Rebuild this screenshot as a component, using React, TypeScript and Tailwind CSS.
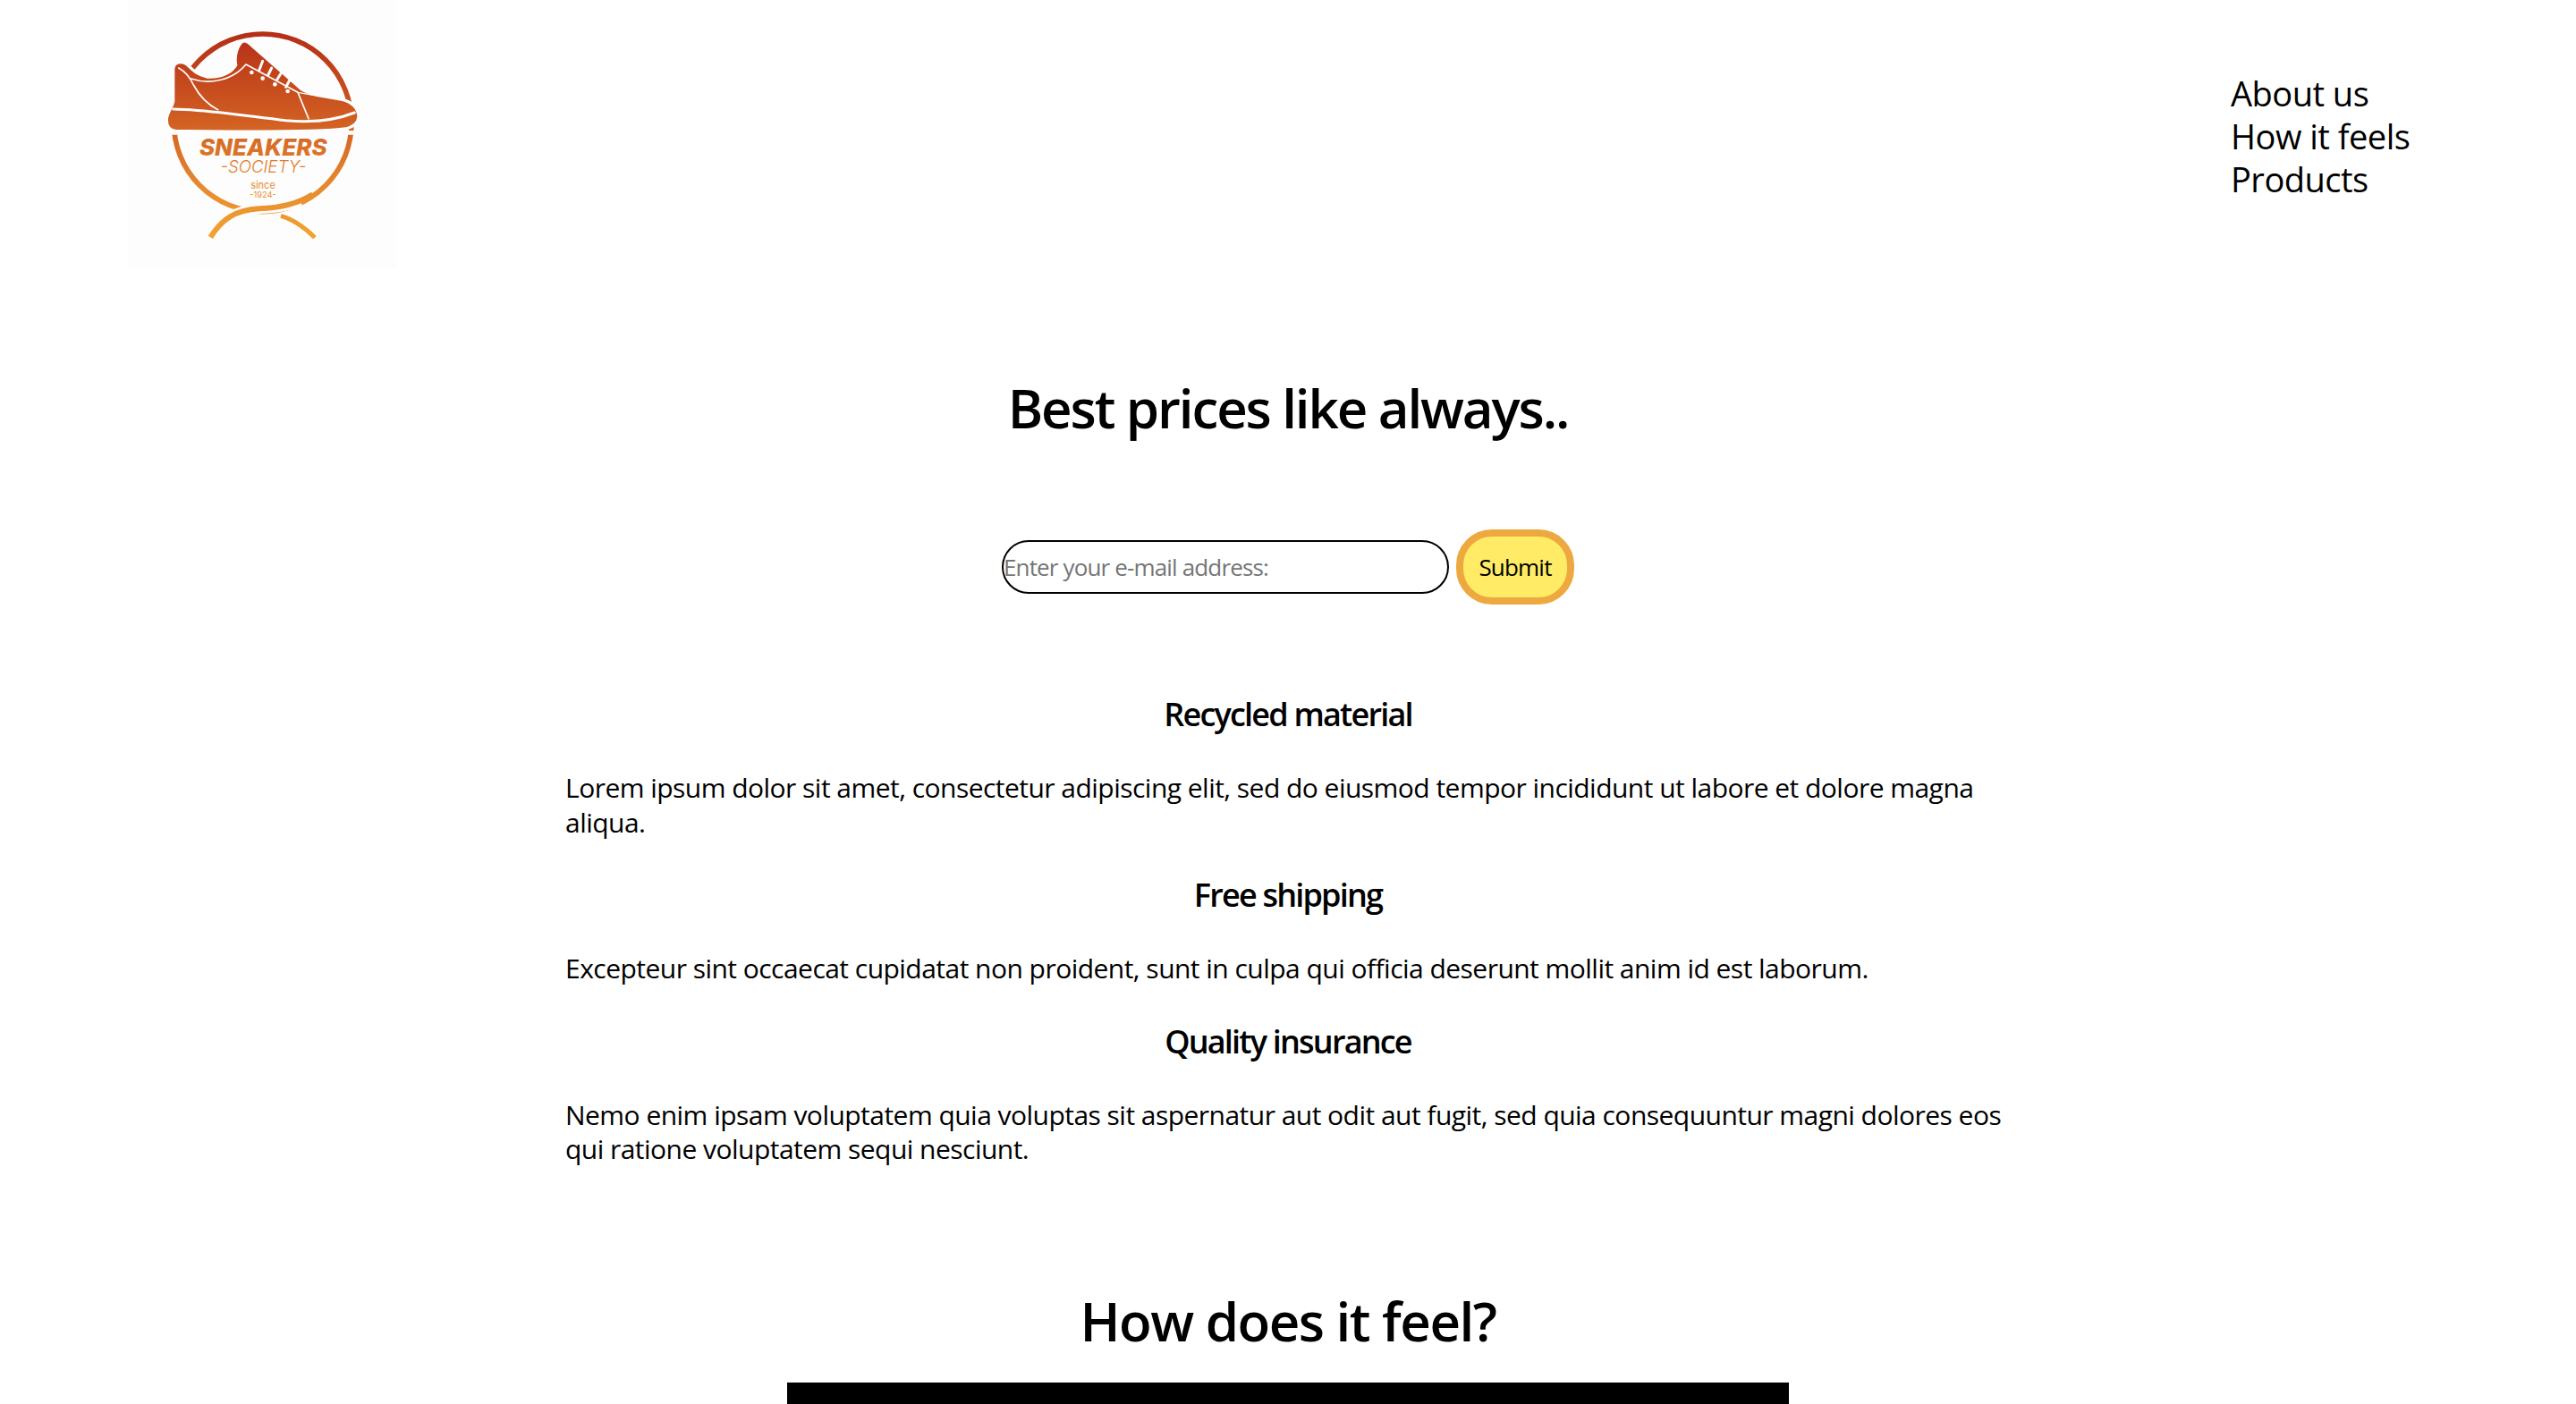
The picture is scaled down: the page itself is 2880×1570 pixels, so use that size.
function Logo() {
  const shoe =
    "M222 232 C224 208 250 202 268 216 C285 232 300 250 335 258 C385 262 420 240 432 218 C426 190 436 150 456 138 C470 134 478 146 492 158 L640 288 C655 304 675 312 700 318 L790 334 C825 344 843 364 844 392 C842 414 826 426 800 432 C700 446 420 442 232 440 C208 438 198 420 200 396 C204 374 218 360 222 340 Z";
  return (
    <svg viewBox="70 0 900 900" className="block h-[300px] w-[300px]">
      <defs>
        <linearGradient id="logoFill" gradientUnits="userSpaceOnUse" x1="0" y1="110" x2="0" y2="800">
          <stop offset="0" stopColor="#b52e17" />
          <stop offset="0.4" stopColor="#cf5b21" />
          <stop offset="0.75" stopColor="#e68a2e" />
          <stop offset="1" stopColor="#f2a431" />
        </linearGradient>
      </defs>
      <rect x="70" y="0" width="900" height="900" fill="#fdfdfd" />
      <circle cx="522" cy="412" r="298" fill="none" stroke="url(#logoFill)" strokeWidth="17" />
      <path d="M200 445 H850" stroke="#fdfdfd" strokeWidth="14" />
      <path d={shoe} fill="url(#logoFill)" stroke="#fdfdfd" strokeWidth="10" />
      <g fill="none" stroke="#fdfdfd" strokeLinecap="round" strokeLinejoin="round">
        <path d="M240 228 C262 240 278 258 290 285 C310 322 340 352 372 368" strokeWidth="5" />
        <path d="M282 264 C340 284 420 272 466 216 L640 310 L676 398" strokeWidth="5" />
        <path d="M640 310 L695 320" strokeWidth="4" />
        <path d="M222 366 C340 368 460 388 600 404 C690 412 770 402 830 378" strokeWidth="9" />
        <path d="M522 205 L510 236 M552 228 L540 252 M582 248 L570 268 M612 270 L600 292" strokeWidth="9" />
      </g>
      <g fill="#fdfdfd">
        <circle cx="485" cy="243" r="7" />
        <circle cx="522" cy="263" r="7" />
        <circle cx="563" cy="283" r="7" />
        <circle cx="606" cy="306" r="7" />
      </g>
      <path
        d="M347 796 C385 735 430 705 510 700 C560 699 610 690 650 676"
        fill="none"
        stroke="#fdfdfd"
        strokeWidth="34"
      />
      <path
        d="M347 796 C385 735 430 705 510 700 C580 698 640 684 690 652"
        fill="none"
        stroke="url(#logoFill)"
        strokeWidth="18"
      />
      <path d="M583 724 C630 738 665 765 697 797" fill="none" stroke="url(#logoFill)" strokeWidth="15" />
      <g textAnchor="middle" fill="url(#logoFill)" className="font-['Inter','Liberation_Sans',sans-serif]">
        <text x="524" y="521" fontSize="78" fontWeight="800" fontStyle="italic">
          SNEAKERS
        </text>
        <text x="524" y="579" fontSize="56" fontStyle="italic" fontWeight="300">
          -SOCIETY-
        </text>
        <text x="523" y="632" fontSize="33">
          since
        </text>
        <text x="523" y="664" fontSize="28">
          -1924-
        </text>
      </g>
    </svg>
  );
}

export default function App() {
  return (
    <div className="min-h-screen bg-white font-['Open_Sans','Liberation_Sans',sans-serif] text-black">
      <header className="flex items-start justify-between pl-[143px] pr-[182px]">
        <Logo />
        <nav className="pt-[80px]">
          <ul className="w-[204px] text-[38px] leading-[48px] tracking-[-0.5px]">
            <li>About us</li>
            <li>How it feels</li>
            <li>Products</li>
          </ul>
        </nav>
      </header>

      <main className="flex flex-col items-center">
        <h1 className="mt-[112px] text-[60px] leading-[88px] font-semibold tracking-[-2.1px]">Best prices like always..</h1>

        <form className="mt-[92px] flex items-center gap-2">
          <input
            type="email"
            placeholder="Enter your e-mail address:"
            className="h-[60px] w-[500px] rounded-[30px] border-2 border-black text-[26px] tracking-[-0.85px] placeholder:text-[#757575]"
          />
          <button
            type="button"
            className="h-[84px] w-[132px] rounded-[40px] border-[8px] border-[#eda93f] bg-[#ffeb66] text-[26px] tracking-[-0.8px]"
          >
            Submit
          </button>
        </form>

        <section className="mt-[95px] w-[1616px]">
          <h3 className="text-center text-[36px] leading-[56px] font-semibold tracking-[-1.8px]">Recycled material</h3>
          <p className="mt-[35px] text-[30px] leading-[38.5px] tracking-[-0.53px]">
            Lorem ipsum dolor sit amet, consectetur adipiscing elit, sed do eiusmod tempor incididunt ut labore et dolore magna aliqua.
          </p>
          <h3 className="mt-[34px] text-center text-[36px] leading-[56px] font-semibold tracking-[-1.8px]">Free shipping</h3>
          <p className="mt-[35px] text-[30px] leading-[38.5px] tracking-[-0.53px]">
            Excepteur sint occaecat cupidatat non proident, sunt in culpa qui officia deserunt mollit anim id est laborum.
          </p>
          <h3 className="mt-[34px] text-center text-[36px] leading-[56px] font-semibold tracking-[-1.8px]">Quality insurance</h3>
          <p className="mt-[35px] text-[30px] leading-[38.5px] tracking-[-0.53px]">
            Nemo enim ipsam voluptatem quia voluptas sit aspernatur aut odit aut fugit, sed quia consequuntur magni dolores eos qui ratione voluptatem sequi nesciunt.
          </p>
        </section>

        <h2 className="mt-[128px] text-[60px] leading-[88px] font-semibold tracking-[-1.5px]">How does it feel?</h2>
        <div className="mt-[25px] h-[630px] w-[1120px] bg-black" />
      </main>
    </div>
  );
}
